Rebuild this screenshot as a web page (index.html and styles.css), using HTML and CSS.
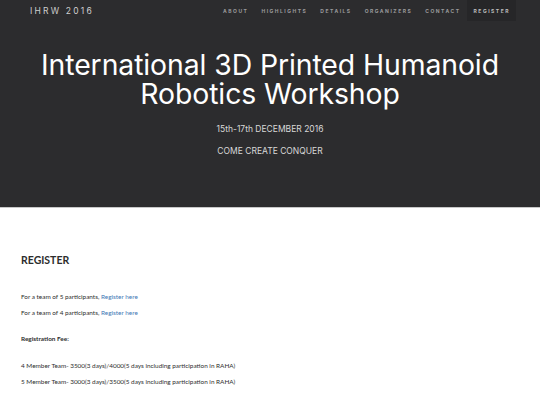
FILE: index.html
```html
<!DOCTYPE html>
<html>
    <head>
        <title>IHRW 2016</title>
        <link rel="stylesheet" href="styles.css">
    </head>
    <body>
        <header class="hero">
            <nav class="navbar">
                <a class="brand" href="#">IHRW 2016</a>
                <ul class="nav-links">
                    <li><a href="#about">About</a></li>
                    <li><a href="#highlights">Highlights</a></li>
                    <li><a href="#details">Details</a></li>
                    <li><a href="#organizers">Organizers</a></li>
                    <li><a href="#contact">Contact</a></li>
                    <li class="active"><a href="#register">Register</a></li>
                </ul>
            </nav>

            <div class="hero-text">
                <h1>International 3D Printed Humanoid Robotics Workshop</h1>
                <p>15th-17th DECEMBER 2016</p>
                <p>COME CREATE CONQUER</p>
            </div>
        </header>

        <section class="register" id="register">
            <h2>REGISTER</h2>

            <p>For a team of 5 participants, <a href="#">Register here</a></p>
            <p>For a team of 4 participants, <a href="#">Register here</a></p>

            <p class="fee-title">Registration Fee:</p>

            <p>4 Member Team- 3500(3 days)/4000(5 days including participation in RAHA)</p>
            <p>5 Member Team- 3000(3 days)/3500(5 days including participation in RAHA)</p>
        </section>
    </body>
</html>
```

FILE: styles.css
```css
body{
    margin: 0;
    font-family: "Lato", "Liberation Sans", sans-serif;
    background-color: #fff;
    color: #333;
}
a{
    text-decoration: none;
}
.hero{
    background-color: #2c2c2e;
    height: 207px;
    border-bottom: 1px solid #c8c8c8;
}
.navbar{
    display: flex;
    justify-content: space-between;
    align-items: center;
    height: 21px;
    padding: 0 24px 0 30px;
}
.brand{
    font-family: "Inter", "Open Sans", sans-serif;
    color: #cfcfcf;
    font-size: 8.5px;
    letter-spacing: 2.2px;
}
.nav-links{
    display: flex;
    list-style: none;
    margin: 0;
    padding: 0;
    height: 100%;
}
.nav-links li{
    display: flex;
    align-items: center;
}
.nav-links a{
    font-family: "Inter", "Open Sans", sans-serif;
    font-size: 5px;
    font-weight: 700;
    letter-spacing: 1.5px;
    text-transform: uppercase;
    color: #9a9a9c;
    padding: 0 6px 0 7px;
}
.nav-links .active{
    background-color: #262628;
}
.nav-links .active a{
    color: #bdbdbd;
}
.hero-text{
    text-align: center;
    color: #fff;
    font-family: "Inter", "Open Sans", sans-serif;
}
.hero-text h1{
    font-weight: 400;
    font-size: 28.4px;
    line-height: 29px;
    margin: 29px 0 16px;
    letter-spacing: -0.1px;
}
.hero-text p{
    color: #d8d8d8;
    font-size: 8.5px;
    margin: 0 0 12px;
}
.register{
    padding: 26px 21px;
}
.register h2{
    font-size: 10.5px;
    margin: 20px 0 27px;
    color: #2d2d2d;
}
.register p{
    font-size: 6.4px;
    margin: 0 0 9px;
    color: #2d2d2d;
}
.register a{
    color: #3f78b5;
}
.register .fee-title{
    font-weight: 700;
    margin: 19px 0 20px;
}
```
